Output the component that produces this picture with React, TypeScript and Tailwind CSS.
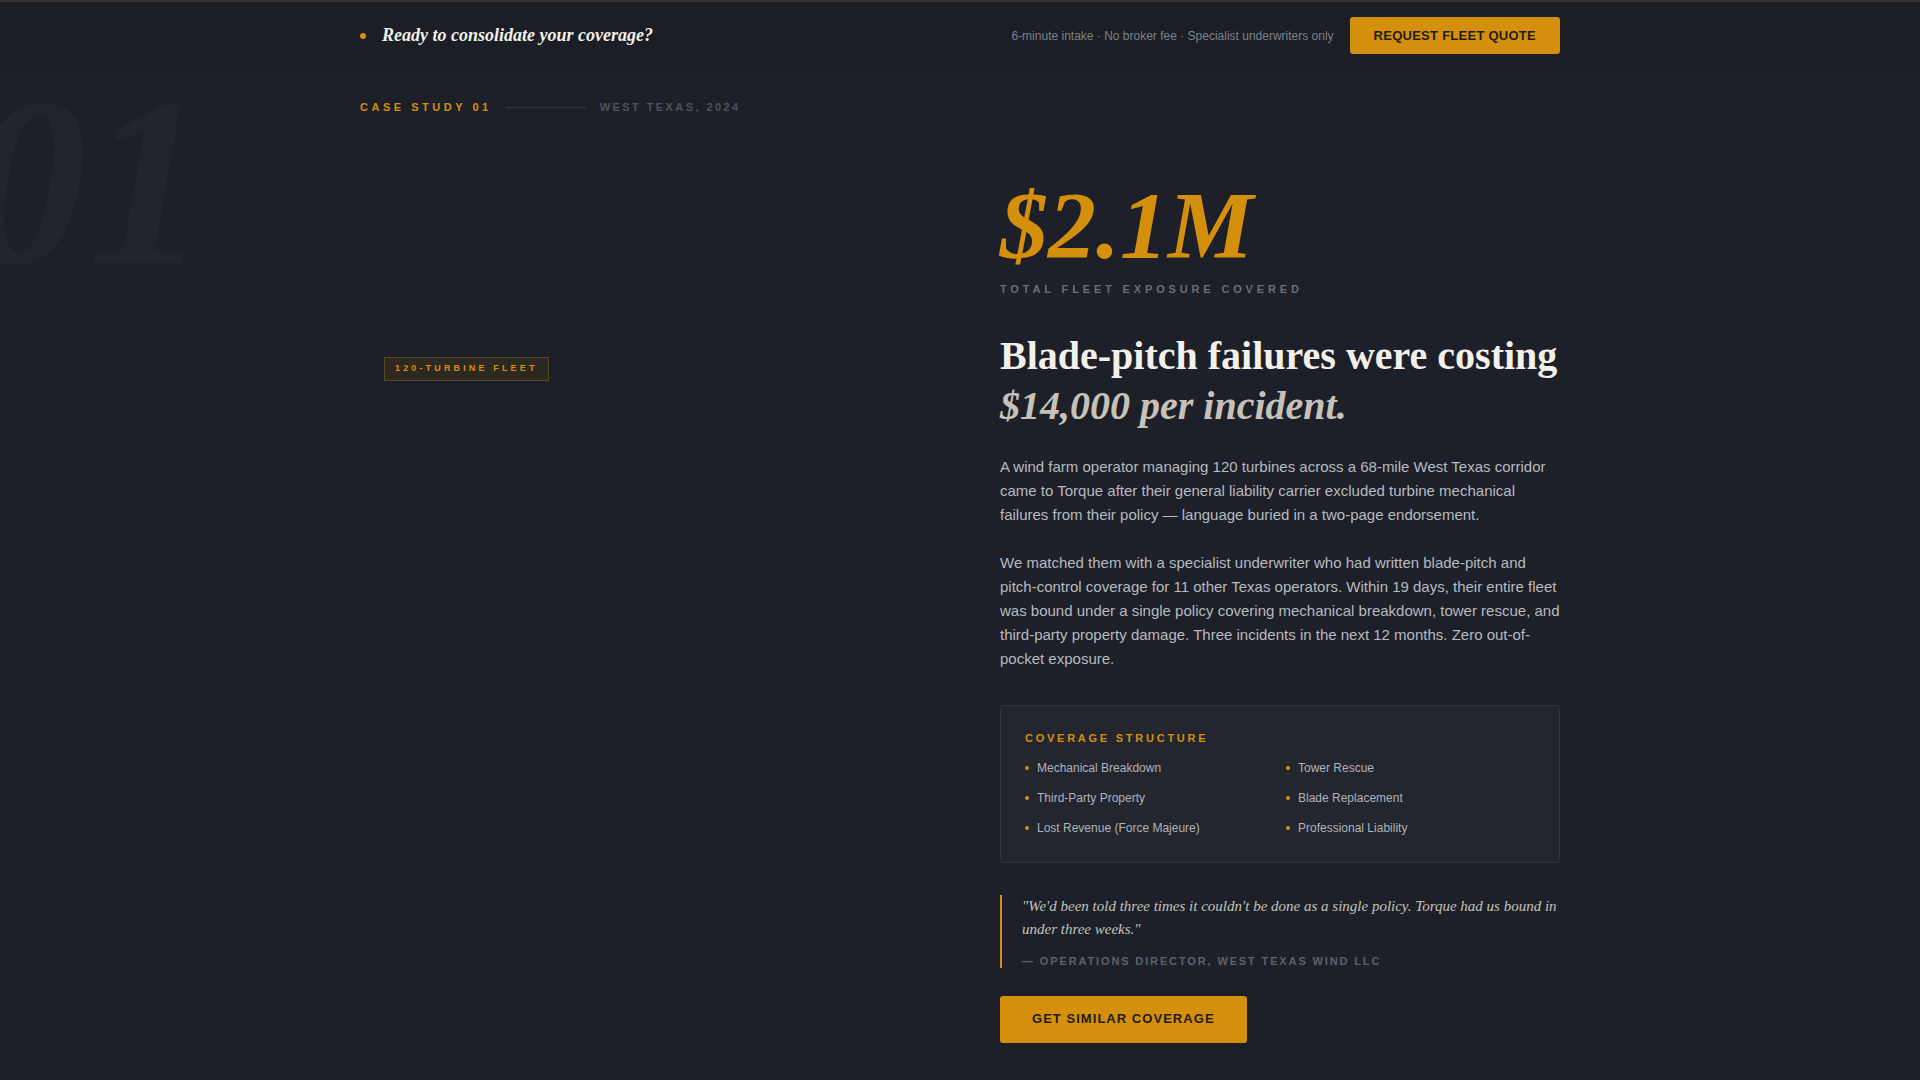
import React from "react";

const items = [
  "Mechanical Breakdown",
  "Tower Rescue",
  "Third-Party Property",
  "Blade Replacement",
  "Lost Revenue (Force Majeure)",
  "Professional Liability",
];

export default function App() {
  return (
    <div className="relative min-h-screen overflow-hidden bg-[#1d2028] font-['Liberation_Sans',Arial,sans-serif]">
      {/* watermark */}
      <div className="pointer-events-none absolute left-[-33px] top-[62px] select-none font-['Liberation_Serif',serif] text-[240px] font-bold italic leading-none text-[#22252d]">
        01
      </div>

      {/* header */}
      <header className="relative border-t-2 border-[#3a3127] bg-[#1b1e24]">
        <div className="mx-auto flex h-[70px] w-[1200px] items-center justify-between pb-[3px]">
          <div className="flex items-center gap-4">
            <span className="h-[6px] w-[6px] rounded-full bg-[#d4900c]" />
            <span className="font-['Liberation_Serif',serif] text-[18px] font-semibold italic text-[#f3f0ea]">
              Ready to consolidate your coverage?
            </span>
          </div>
          <div className="flex items-center gap-4">
            <span className="text-[12px] text-[#7d828b]">
              6-minute intake · No broker fee · Specialist underwriters only
            </span>
            <button className="flex h-[37px] items-center rounded-[3px] bg-[#d4900c] px-6 text-[13px] font-bold tracking-[0.02em] text-[#1f1c17]">
              REQUEST FLEET QUOTE
            </button>
          </div>
        </div>
      </header>

      <main className="relative mx-auto w-[1200px] pt-[28px] pb-10">
        <div className="flex items-center gap-3.5 text-[11px] font-bold leading-[14px]">
          <span className="tracking-[0.32em] text-[#d4900c]">CASE STUDY 01</span>
          <span className="h-px w-20 bg-[#353942]" />
          <span className="tracking-[0.22em] text-[#4d525b]">WEST TEXAS, 2024</span>
        </div>

        <div className="mt-16 grid grid-cols-2 gap-20">
          <div>
            <div className="ml-6 mt-[179px] inline-flex h-6 items-center border border-[#5a4825] bg-[#2d2920] px-2.5 text-[9px] font-bold tracking-[0.35em] text-[#d4900c]">
              120-TURBINE FLEET
            </div>
          </div>

          <div>
            <div className="font-['Liberation_Serif',serif] text-[96px] font-bold italic leading-none text-[#d4900c]">
              $2.1M
            </div>
            <div className="mt-2 text-[11px] font-bold leading-[14px] tracking-[0.35em] text-[#6a6e77]">
              TOTAL FLEET EXPOSURE COVERED
            </div>

            <h2 className="mt-[35px] font-['Liberation_Serif',serif] text-[40px] font-bold leading-[1.25]">
              <span className="block text-[#f3f0ea]">Blade-pitch failures were costing</span>
              <span className="block italic text-[#c6c2ba]">$14,000 per incident.</span>
            </h2>

            <p className="mt-6 text-[15px] leading-[1.6] text-[#b7bac1]">
              A wind farm operator managing 120 turbines across a 68-mile West Texas corridor came to Torque after
              their general liability carrier excluded turbine mechanical failures from their policy — language buried
              in a two-page endorsement.
            </p>
            <p className="mt-6 text-[15px] leading-[1.6] text-[#b7bac1]">
              We matched them with a specialist underwriter who had written blade-pitch and pitch-control coverage for
              11 other Texas operators. Within 19 days, their entire fleet was bound under a single policy covering
              mechanical breakdown, tower rescue, and third-party property damage. Three incidents in the next 12
              months. Zero out-of-pocket exposure.
            </p>

            <div className="mt-[34px] rounded-[3px] border border-[#30343c] bg-[#23262e] p-6">
              <div className="text-[11px] font-bold leading-4 tracking-[0.25em] text-[#d4900c]">
                COVERAGE STRUCTURE
              </div>
              <ul className="mt-3 grid grid-cols-2 gap-x-3 gap-y-[10px]">
                {items.map((it) => (
                  <li key={it} className="flex items-center gap-2 text-[12px] leading-5 text-[#b0b3ba]">
                    <span className="h-1 w-1 rounded-full bg-[#d4900c]" />
                    {it}
                  </li>
                ))}
              </ul>
            </div>

            <blockquote className="mt-8 border-l-2 border-[#d4900c] pl-5">
              <p className="font-['Liberation_Serif',serif] text-[15px] italic leading-[1.55] text-[#c6c2ba]">
                "We'd been told three times it couldn't be done as a single policy. Torque had us bound in under three
                weeks."
              </p>
              <div className="mt-3 text-[11px] font-bold leading-[14px] tracking-[0.17em] text-[#5d626b]">
                — OPERATIONS DIRECTOR, WEST TEXAS WIND LLC
              </div>
            </blockquote>

            <button className="mt-7 flex h-[47px] items-center rounded-[3px] bg-[#d4900c] px-8 text-[13px] font-bold tracking-[0.08em] text-[#1f1c17]">
              GET SIMILAR COVERAGE
            </button>
          </div>
        </div>
      </main>
    </div>
  );
}
